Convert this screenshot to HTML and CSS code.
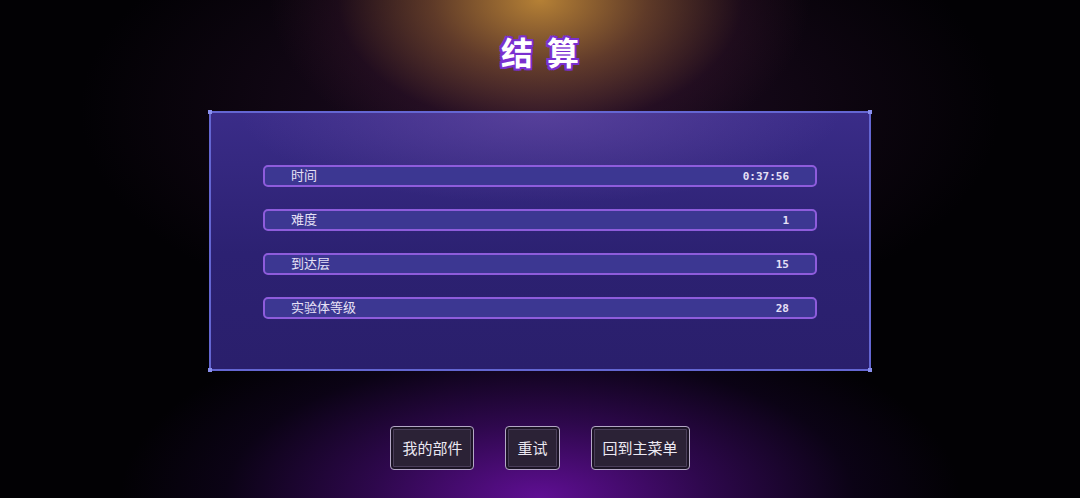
FILE: index.html
```html
<!DOCTYPE html>
<html lang="zh-CN">
<head>
  <meta charset="UTF-8" />
  <title>结算</title>
  <meta name="viewport" content="width=device-width, initial-scale=1.0" />
  <link rel="stylesheet" href="styles.css">
</head>
<body>
  <div class="screen">
    <h1 class="title">结算</h1>

    <div class="panel">
      <span class="dot tl"></span>
      <span class="dot tr"></span>
      <span class="dot bl"></span>
      <span class="dot br"></span>

      <div class="stat"><span class="label">时间</span><span class="value">0:37:56</span></div>
      <div class="stat"><span class="label">难度</span><span class="value">1</span></div>
      <div class="stat"><span class="label">到达层</span><span class="value">15</span></div>
      <div class="stat"><span class="label">实验体等级</span><span class="value">28</span></div>
    </div>

    <div class="actions">
      <button class="btn">我的部件</button>
      <button class="btn">重试</button>
      <button class="btn">回到主菜单</button>
    </div>
  </div>
</body>
</html>
```

FILE: styles.css
```css
html, body { margin: 0; height: 100%; }
body {
  font-family: "Noto Sans CJK SC", "Noto Sans", sans-serif;
  color: #eee8f8;
  background:
    radial-gradient(ellipse 270px 170px at 540px 0px, rgba(190,135,55,0.95) 0%, rgba(135,85,50,0.65) 40%, rgba(55,22,42,0.35) 75%, rgba(0,0,0,0) 100%),
    radial-gradient(ellipse 460px 230px at 540px 110px, rgba(40,15,45,0.85) 0%, rgba(0,0,0,0) 100%),
    radial-gradient(ellipse 420px 190px at 540px 498px, rgba(100,15,155,0.95) 0%, rgba(60,10,100,0.75) 40%, rgba(22,5,42,0.45) 75%, rgba(0,0,0,0) 100%),
    #020104;
  overflow: hidden;
}
.screen {
  display: flex;
  flex-direction: column;
  align-items: center;
}
.title {
  margin: 27px 0 0;
  height: 48px;
  line-height: 48px;
  font-size: 32px;
  font-weight: 700;
  letter-spacing: 14px;
  padding-left: 14px;
  color: #fff;
  text-shadow:
    2px 0 0 #7a2fd0, -2px 0 0 #7a2fd0, 0 2px 0 #7a2fd0, 0 -2px 0 #7a2fd0,
    2px 2px 0 #7a2fd0, -2px -2px 0 #7a2fd0, 2px -2px 0 #7a2fd0, -2px 2px 0 #7a2fd0;
}
.panel {
  position: relative;
  box-sizing: border-box;
  margin-top: 36px;
  width: 662px;
  height: 260px;
  padding: 52px 52px 0;
  border: 2px solid #6466d2;
  background:
    radial-gradient(ellipse 300px 90px at 50% 0%, rgba(110,80,170,0.55) 0%, rgba(0,0,0,0) 100%),
    linear-gradient(180deg, #3a2c88 0%, #2c2172 55%, #2a1f6c 100%);
  display: flex;
  flex-direction: column;
  gap: 22px;
}
.dot {
  position: absolute;
  width: 4px;
  height: 4px;
  background: #8a90ee;
}
.dot.tl { top: -3px; left: -3px; }
.dot.tr { top: -3px; right: -3px; }
.dot.bl { bottom: -3px; left: -3px; }
.dot.br { bottom: -3px; right: -3px; }
.stat {
  box-sizing: border-box;
  height: 22px;
  border: 2px solid #8e5cdc;
  border-radius: 5px;
  background: #3c3792;
  display: flex;
  align-items: center;
  justify-content: space-between;
  padding: 0 26px;
  font-size: 13px;
  color: #e6e0f6;
}
.label {
  line-height: 1;
  margin-bottom: 4px;
}
.value {
  line-height: 1;
  font-family: "DejaVu Sans Mono", monospace;
  font-weight: 700;
  font-size: 11px;
}
.actions {
  margin-top: 55px;
  display: flex;
  gap: 31px;
}
.btn {
  box-sizing: border-box;
  height: 44px;
  padding: 0 11px 2px;
  font-family: "Noto Sans CJK SC", "Noto Sans", sans-serif;
  font-size: 15px;
  color: #ece8f2;
  background: #2b2236;
  border: 1px solid #b4a8c6;
  border-radius: 4px;
  box-shadow: inset 0 0 0 2px #1c1426, inset 0 0 0 3px #4a3e5a;
  cursor: pointer;
}
```
